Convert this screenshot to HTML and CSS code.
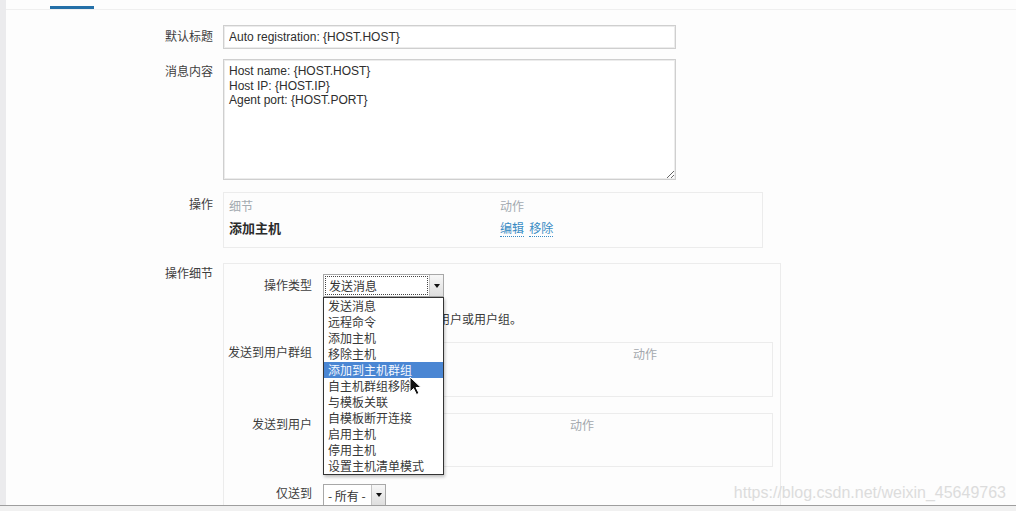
FILE: index.html
```html
<!DOCTYPE html>
<html lang="zh-CN">
  <head>
    <meta charset="UTF-8" />
    <title>自动注册动作 - 操作</title>
    <link rel="stylesheet" href="styles.css">
  </head>
  <body>
    <div class="screen">
      <div class="main">
        <!-- 탭 -->
        <div class="tabs">
          <span class="tab"><span>动作</span></span>
          <span class="tab on"><span>操作</span></span>
        </div>

        <div class="form">
          <div class="row r-subject">
            <label class="lbl">默认标题</label>
            <input class="txt" type="text" value="Auto registration: {HOST.HOST}" />
          </div>

          <div class="row r-msg">
            <label class="lbl">消息内容</label>
            <textarea class="area">Host name: {HOST.HOST}
Host IP: {HOST.IP}
Agent port: {HOST.PORT}</textarea>
          </div>

          <div class="row r-ops">
            <label class="lbl">操作</label>
            <div class="ops">
              <div class="ops-head">
                <span class="c1">细节</span>
                <span>动作</span>
              </div>
              <div class="ops-line">
                <span class="c1 strong">添加主机</span>
                <span><a class="lnk">编辑</a> <a class="lnk">移除</a></span>
              </div>
            </div>
          </div>

          <div class="row r-detail">
            <label class="lbl">操作细节</label>
            <div class="detail">
              <div class="sub r-type">
                <span class="sub-lbl">操作类型</span>
                <div class="sel-wrap">
                  <div class="sel sel-type">
                    <span class="sel-val"><span class="focus">发送消息</span></span>
                    <span class="sel-btn"><i></i></span>
                  </div>
                  <!-- 펼쳐진 목록 -->
                  <ul class="drop">
                    <li>发送消息</li>
                    <li>远程命令</li>
                    <li>添加主机</li>
                    <li>移除主机</li>
                    <li class="hi">添加到主机群组</li>
                    <li>自主机群组移除</li>
                    <li>与模板关联</li>
                    <li>自模板断开连接</li>
                    <li>启用主机</li>
                    <li>停用主机</li>
                    <li>设置主机清单模式</li>
                  </ul>
                </div>
              </div>

              <div class="sub r-hint">
                <span class="sub-lbl"></span>
                <span class="hint">必须至少要选择一个用户或用户组。</span>
              </div>

              <div class="sub r-grp">
                <span class="sub-lbl">发送到用户群组</span>
                <div class="list">
                  <div class="list-head">
                    <span class="col-grp">用户群组</span>
                    <span>动作</span>
                  </div>
                </div>
              </div>

              <div class="sub r-usr">
                <span class="sub-lbl">发送到用户</span>
                <div class="list">
                  <div class="list-head">
                    <span class="col-usr">用户</span>
                    <span>动作</span>
                  </div>
                </div>
              </div>

              <div class="sub r-only">
                <span class="sub-lbl">仅送到</span>
                <div class="sel sel-only">
                  <span class="sel-val">- 所有 -</span>
                  <span class="sel-btn"><i></i></span>
                </div>
              </div>
            </div>
          </div>
        </div>

        <!-- 마우스 커서 -->
        <svg class="cursor" width="14" height="20" viewBox="0 0 14 20">
          <path d="M1 1 L1 16 L4.5 12.5 L7.5 18.5 L10 17.3 L7 11.5 L12 11.5 Z"
            fill="#111" stroke="#fff" stroke-width="1" stroke-linejoin="round" />
        </svg>

        <!-- 워터마크 -->
        <div class="mark">https://blog.csdn.net/weixin_45649763</div>
      </div>
      <div class="bottom"></div>
    </div>
  </body>
</html>
```

FILE: styles.css
```css
html,
body {
  margin: 0;
  padding: 0;
}
body {
  font-family: "Liberation Sans", "Noto Sans CJK SC", sans-serif;
  font-size: 12px;
  color: #3d3d3d;
  background: #fdfdfd;
}

.screen {
  width: 1016px;
  height: 511px;
  display: flex;
  flex-direction: column;
  overflow: hidden;
}
.main {
  position: relative;
  flex: 1;
  overflow: hidden;
  border-left: 6px solid #ebebed;
  background: #fdfdfd;
}
/* 하단 플레이어 줄 */
.bottom {
  height: 5px;
  border-top: 1px solid #9e9e9e;
  background: #f1f1f1;
}

/* 탭 */
.tabs {
  display: flex;
  gap: 4px;
  height: 9px;
  padding-left: 12px;
  border-bottom: 1px solid #efefef;
  overflow: hidden;
}
.tab {
  box-sizing: border-box;
  height: 9px;
  width: 28px;
  color: #7fc0de;
}
.tab span {
  display: block;
  margin-top: -11px;
  line-height: 12px;
}
.tab.on {
  width: 44px;
  padding-left: 10px;
  color: #9a9a9a;
  border-bottom: 3px solid #2470a8;
}

/* 폼 */
.form {
  padding-top: 15px;
}
.row {
  display: flex;
  align-items: flex-start;
}
.lbl {
  flex: none;
  width: 217px;
  padding-right: 10px;
  box-sizing: border-box;
  text-align: right;
  line-height: 16px;
  padding-top: 4px;
}
.r-msg {
  margin-top: 10px;
}
.r-msg .lbl {
  padding-top: 5px;
}
.r-ops {
  margin-top: 12px;
}
.r-ops .lbl {
  padding-top: 5px;
}
.r-detail {
  margin-top: 15px;
}
.r-detail .lbl {
  padding-top: 3px;
}

.txt,
.area {
  box-sizing: border-box;
  width: 453px;
  margin: 0;
  border: 1px solid #cfcfcf;
  box-shadow: inset 0 0 0 1px #ececec;
  background: #fff;
  font: 12px "Liberation Sans", "Noto Sans CJK SC", sans-serif;
  color: #2e2e2e;
  outline: none;
}
.txt {
  height: 24px;
  padding: 0 5px;
}
.area {
  display: block;
  height: 121px;
  padding: 4px 5px;
  line-height: 14.5px;
  resize: both;
}

/* 操作 박스 */
.ops {
  box-sizing: border-box;
  width: 540px;
  height: 56px;
  border: 1px solid #ececec;
  padding: 6px 5px 0;
}
.ops-head,
.ops-line {
  display: flex;
  line-height: 16px;
}
.ops-head {
  color: #a3aab0;
}
.ops-line {
  margin-top: 6px;
}
.c1 {
  width: 271px;
}
.strong {
  font-weight: bold;
  font-size: 13px;
  color: #2b2b2b;
}
.lnk {
  color: #3a8cc4;
  border-bottom: 1px dotted #3a8cc4;
  cursor: pointer;
}
.lnk + .lnk {
  margin-left: 2px;
}

/* 操作细节 박스 */
.detail {
  box-sizing: border-box;
  width: 558px;
  height: 300px;
  border: 1px solid #ececec;
  padding: 10px 7px 0 0;
}
.sub {
  display: flex;
  align-items: flex-start;
}
.sub-lbl {
  flex: none;
  width: 88px;
  margin-right: 11px;
  text-align: right;
  line-height: 16px;
}
.r-type {
  align-items: center;
}
.r-hint {
  margin-top: 16px;
  line-height: 14px;
}
.hint {
  padding-left: 7px;
  color: #3a3a3a;
  white-space: nowrap;
}
.r-grp {
  margin-top: 15px;
}
.r-grp .sub-lbl {
  padding-top: 3px;
}
.r-usr {
  margin-top: 16px;
}
.r-usr .sub-lbl {
  padding-top: 4px;
}
.r-only {
  margin-top: 17px;
}
.r-only .sub-lbl {
  padding-top: 2px;
}

.list {
  box-sizing: border-box;
  width: 450px;
  height: 55px;
  border: 1px solid #ececec;
  padding: 5px 5px 0;
}
.r-usr .list {
  height: 54px;
}
.list-head {
  display: flex;
  color: #a3a8ad;
  line-height: 14px;
}
.col-grp {
  width: 304px;
}
.col-usr {
  width: 241px;
}

/* 선택상자 */
.sel-wrap {
  position: relative;
}
.sel {
  box-sizing: border-box;
  display: flex;
  border: 1px solid #a8a8a8;
  background: #fff;
  font-family: "Noto Sans CJK SC", "Liberation Sans", sans-serif;
  color: #333;
}
.sel-type {
  width: 121px;
  height: 23px;
}
.sel-only {
  width: 63px;
  height: 22px;
}
.sel-val {
  flex: 1;
  padding: 1px;
  line-height: 19px;
  padding-left: 4px;
}
.sel-type .sel-val {
  padding-left: 1px;
}
.focus {
  display: block;
  height: 17px;
  line-height: 17px;
  padding-left: 3px;
  border: 1px dotted #444;
}
.sel-btn {
  flex: none;
  width: 13px;
  display: flex;
  align-items: center;
  justify-content: center;
  border-left: 1px solid #c4c4c4;
  background: linear-gradient(to bottom, #f7f7f7, #dedede);
}
.sel-btn i {
  width: 0;
  height: 0;
  border-left: 3px solid transparent;
  border-right: 3px solid transparent;
  border-top: 4px solid #111;
}

/* 펼쳐진 목록 */
.drop {
  position: absolute;
  top: 23px;
  left: 0;
  z-index: 5;
  box-sizing: border-box;
  width: 121px;
  margin: 0;
  padding: 0;
  list-style: none;
  border: 1px solid #333;
  background: #fff;
  box-shadow: 1px 2px 3px rgba(0, 0, 0, 0.25);
  font-family: "Noto Sans CJK SC", sans-serif;
  color: #383838;
}
.drop li {
  height: 16px;
  line-height: 16px;
  padding-left: 4px;
  white-space: nowrap;
}
.drop li.hi {
  background: #4a86d3;
  color: #f4f8ff;
}

/* 커서 */
.cursor {
  position: absolute;
  left: 403px;
  top: 376px;
  z-index: 9;
}

/* 워터마크 */
.mark {
  position: absolute;
  right: 10px;
  bottom: 3px;
  font-family: "Liberation Sans", sans-serif;
  font-size: 16px;
  color: #dcdcdc;
  z-index: 8;
}
```
